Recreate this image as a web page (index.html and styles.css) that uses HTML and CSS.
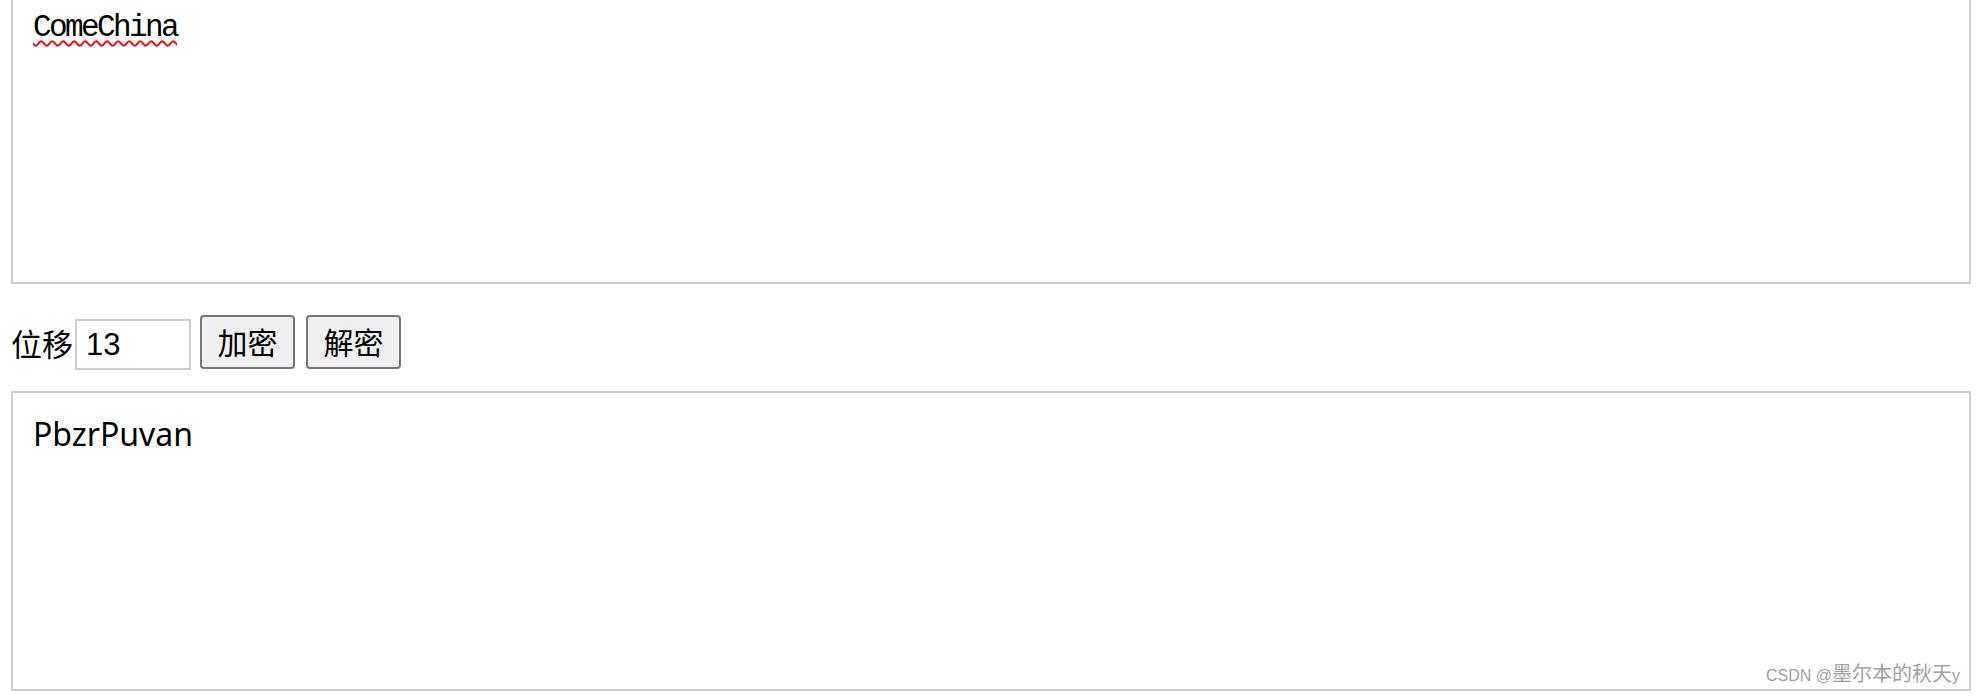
FILE: index.html
```html
<!DOCTYPE html>
<html lang="zh">
<head>
<meta charset="utf-8">
<title>凯撒密码</title>
<link rel="stylesheet" href="styles.css">
</head>
<body>
<div class="page">
  <div class="box box-input"><span class="misspelt">ComeChina</span></div>
  <div class="controls">
    <span class="label">位移</span>
    <div class="shift">13</div>
    <div class="btn">加密</div>
    <div class="btn">解密</div>
  </div>
  <div class="box box-output">PbzrPuvan
    <div class="watermark"><span class="wm-latin">CSDN @</span><span class="wm-cjk">墨尔本的秋天</span><span class="wm-latin">y</span></div>
  </div>
</div>
</body>
</html>
```
FILE: styles.css
```css
html, body {
  margin: 0;
  padding: 0;
  background: #ffffff;
  overflow: hidden;
}
.page {
  margin-top: -16px;
  padding-left: 11px;
  font-family: "Liberation Sans", "Noto Sans CJK SC", sans-serif;
  color: #000;
}
.box {
  box-sizing: border-box;
  width: 1960px;
  height: 300px;
  border: 2px solid #cccccc;
  padding: 16px 20px;
}
.box-input {
  font-family: "Liberation Mono", monospace;
  font-size: 31px;
  letter-spacing: -2.6px;
  line-height: 40px;
  padding-top: 22px;
}
.misspelt {
  text-decoration: underline wavy #ff0000;
  text-decoration-thickness: 1.5px;
  text-underline-offset: 4px;
}
.controls {
  display: flex;
  align-items: flex-start;
  height: 55px;
  margin-top: 31px;
}
.label {
  font-family: "Noto Sans CJK SC", sans-serif;
  font-size: 31px;
  line-height: 31px;
  margin-top: 12px;
  width: 64px;
}
.shift {
  box-sizing: border-box;
  width: 116px;
  height: 51px;
  margin-top: 4px;
  border: 2px solid #cccccc;
  padding-left: 9px;
  font-family: "Liberation Sans", Arial, sans-serif;
  font-size: 31px;
  line-height: 47px;
}
.btn {
  box-sizing: border-box;
  width: 95px;
  height: 54px;
  margin-left: 9px;
  border: 2px solid #767676;
  border-radius: 4px;
  background: #efefef;
  font-family: "Noto Sans CJK SC", sans-serif;
  font-size: 30px;
  line-height: 48px;
  text-align: center;
}
.btn + .btn {
  margin-left: 11px;
}
.box-output {
  position: relative;
  margin-top: 21px;
  font-family: "Noto Sans", "Noto Sans CJK SC", sans-serif;
  font-size: 32px;
  line-height: 40px;
  padding-top: 21px;
}
.watermark {
  position: absolute;
  right: 9px;
  bottom: 2px;
  color: #a0a0a0;
  line-height: 22px;
  white-space: nowrap;
}
.wm-latin {
  font-family: "Liberation Sans", sans-serif;
  font-size: 16px;
}
.wm-cjk {
  font-family: "Noto Sans CJK SC", sans-serif;
  font-size: 20px;
}
```
